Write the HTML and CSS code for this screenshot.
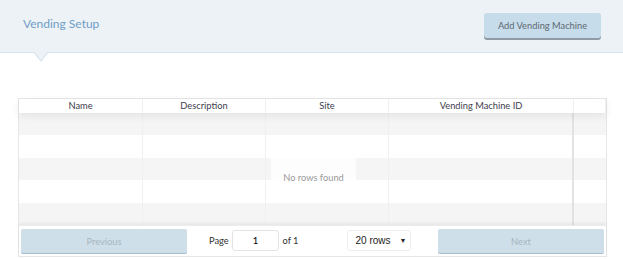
FILE: index.html
```html
<!DOCTYPE html>
<html lang="en">
<head>
    <meta charset="UTF-8">
    <title>Vending Setup</title>
    <link rel="stylesheet" href="styles.css">
</head>
<body>
    <div class="page-header">
        <h1 class="page-title">Vending Setup</h1>
        <button class="add-button">Add Vending Machine</button>
        <span class="header-arrow"></span>
    </div>

    <div class="table-wrap">
        <div class="grid-table">
            <div class="grid-row grid-head">
                <div class="cell col-name">Name</div>
                <div class="cell col-desc">Description</div>
                <div class="cell col-site">Site</div>
                <div class="cell col-id">Vending Machine ID</div>
                <div class="cell col-pad"></div>
            </div>
            <div class="grid-body">
                <div class="grid-row odd"><div class="cell col-name"></div><div class="cell col-desc"></div><div class="cell col-site"></div><div class="cell col-id"></div><div class="cell col-pad"></div></div>
                <div class="grid-row"><div class="cell col-name"></div><div class="cell col-desc"></div><div class="cell col-site"></div><div class="cell col-id"></div><div class="cell col-pad"></div></div>
                <div class="grid-row odd"><div class="cell col-name"></div><div class="cell col-desc"></div><div class="cell col-site"></div><div class="cell col-id"></div><div class="cell col-pad"></div></div>
                <div class="grid-row"><div class="cell col-name"></div><div class="cell col-desc"></div><div class="cell col-site"></div><div class="cell col-id"></div><div class="cell col-pad"></div></div>
                <div class="grid-row odd"><div class="cell col-name"></div><div class="cell col-desc"></div><div class="cell col-site"></div><div class="cell col-id"></div><div class="cell col-pad"></div></div>
            </div>
            <div class="pagination">
                <div class="pager-side">
                    <button class="pager-button" disabled>Previous</button>
                </div>
                <div class="pager-center">
                    <span class="page-info">Page <input class="page-input" type="text" value="1"> of 1</span>
                    <span class="rows-select">20 rows <span class="caret">&#9662;</span></span>
                </div>
                <div class="pager-side">
                    <button class="pager-button" disabled>Next</button>
                </div>
            </div>
            <div class="no-data">No rows found</div>
        </div>
    </div>
</body>
</html>
```

FILE: styles.css
```css
body {
    font-family: 'Lato', 'Liberation Sans', sans-serif;
    background-color: #fff;
    margin: 0;
    padding: 0;
    color: #333;
}

.page-header {
    position: relative;
    height: 52px;
    background-color: #edf2f7;
    border-bottom: 1px solid #d9e4ee;
    display: flex;
    align-items: center;
    justify-content: space-between;
    padding: 0 22px 0 23px;
}

.page-title {
    font-size: 12px;
    font-weight: normal;
    color: #6f9dc5;
    margin: 0 0 6px 0;
}

.add-button {
    width: 117px;
    height: 25px;
    margin-bottom: 1px;
    background-color: #c6dcea;
    color: #5d6873;
    border: none;
    border-radius: 3px;
    box-shadow: 0 2px 0 #8e9aa5;
    font-family: inherit;
    font-size: 9.3px;
    padding: 0;
}

.header-arrow {
    position: absolute;
    left: 33px;
    bottom: -10px;
    width: 0;
    height: 0;
    border-left: 8px solid transparent;
    border-right: 8px solid transparent;
    border-top: 10px solid #dce6ef;
}

.header-arrow::after {
    content: '';
    position: absolute;
    left: -7px;
    top: -11px;
    border-left: 7px solid transparent;
    border-right: 7px solid transparent;
    border-top: 9px solid #edf2f7;
}

.table-wrap {
    padding: 45px 16px 0 18px;
}

.grid-table {
    position: relative;
    width: 587px;
    border: 1px solid #e6e6e6;
}

.grid-row {
    display: flex;
}

.cell {
    box-sizing: border-box;
    border-right: 1px solid #f0f0f0;
    font-size: 9.3px;
    text-align: center;
}

.col-name { width: 124px; }
.col-desc { width: 123px; }
.col-site { width: 123px; }
.col-id { width: 185px; border-right: 2px solid #e2e2e2; }
.col-pad { flex: 1; border-right: none; }

.grid-head {
    height: 14px;
    line-height: 14px;
    background-color: #fff;
    box-shadow: 0 3px 8px rgba(0, 0, 0, 0.08);
    position: relative;
    z-index: 1;
    color: #3d3d4d;
}

.grid-head .cell {
    border-right: 1px solid #f0f0f0;
}

.grid-body .grid-row {
    height: 22.4px;
}

.grid-body .odd {
    background-color: #f5f5f5;
}

.pagination {
    display: flex;
    align-items: center;
    height: 31px;
    padding: 0 2px;
    box-shadow: 0 -2px 3px rgba(0, 0, 0, 0.06);
    border-top: 1px solid #ececec;
    box-sizing: border-box;
    position: relative;
}

.pager-side {
    width: 166px;
}

.pager-button {
    width: 166px;
    height: 24px;
    background-color: #cfdfe9;
    color: #a7b5c0;
    border: none;
    border-radius: 2px;
    box-shadow: 0 1px 0 #a9bccb;
    font-family: inherit;
    font-size: 9.3px;
    padding: 0;
}

.pager-center {
    flex: 1;
    display: flex;
    align-items: center;
    padding-left: 22px;
    font-size: 9.3px;
}

.page-info {
    margin-right: 48px;
}

.page-input {
    width: 47px;
    height: 21px;
    box-sizing: border-box;
    border: 1px solid #e4e4e4;
    border-radius: 3px;
    text-align: center;
    font-family: inherit;
    font-size: 9.5px;
    margin: 0 1px;
}

.rows-select {
    display: inline-flex;
    align-items: center;
    justify-content: space-between;
    width: 64px;
    height: 21px;
    box-sizing: border-box;
    padding: 0 5px 0 8px;
    border: 1px solid #eee;
    border-radius: 3px;
    font-family: 'Liberation Sans', sans-serif;
    font-size: 10px;
    color: #222;
}

.caret {
    font-size: 8px;
}

.no-data {
    position: absolute;
    left: 252px;
    top: 59px;
    width: 85px;
    height: 23px;
    line-height: 39px;
    background-color: rgba(255, 255, 255, 0.8);
    color: #9a9a9a;
    font-size: 9.3px;
    text-align: center;
    z-index: 2;
}
```
